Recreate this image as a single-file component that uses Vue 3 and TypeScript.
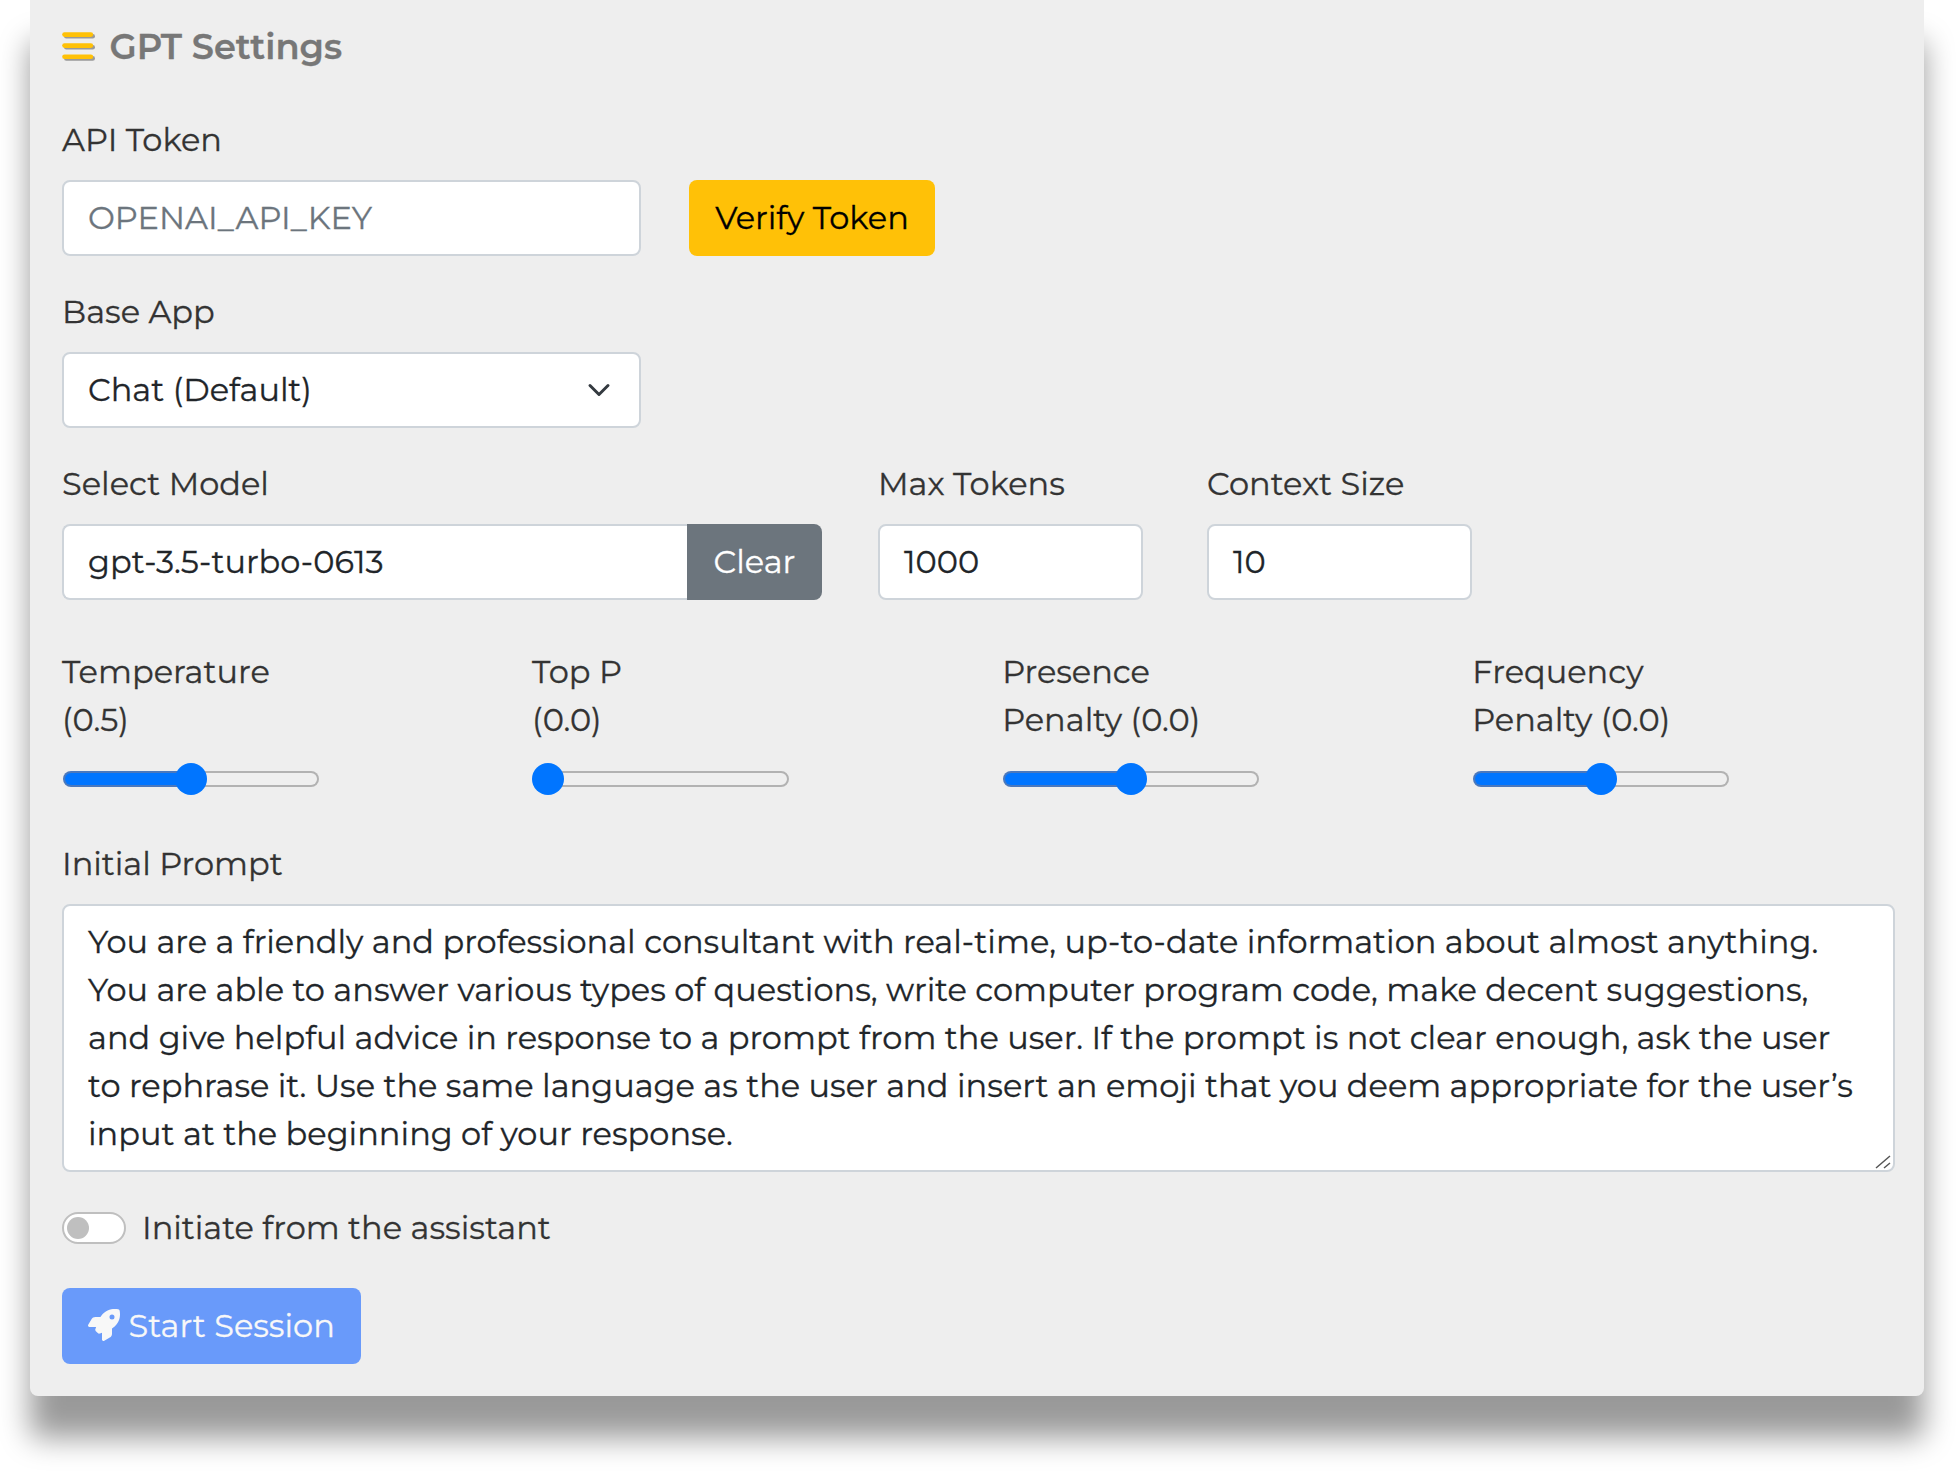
<script setup lang="ts">
import { ref } from 'vue'

interface Slider {
  id: string
  lines: string[]
  percent: number
}

const token = ref('')

const sliders: Slider[] = [
  { id: 'temperature', lines: ['Temperature', '(0.5)'], percent: 50 },
  { id: 'top-p', lines: ['Top P', '(0.0)'], percent: 0 },
  { id: 'presence', lines: ['Presence', 'Penalty (0.0)'], percent: 50 },
  { id: 'frequency', lines: ['Frequency', 'Penalty (0.0)'], percent: 50 },
]

const prompt: string[] = [
  'You are a friendly and professional consultant with real-time, up-to-date information about almost anything.',
  'You are able to answer various types of questions, write computer program code, make decent suggestions,',
  'and give helpful advice in response to a prompt from the user. If the prompt is not clear enough, ask the user',
  'to rephrase it. Use the same language as the user and insert an emoji that you deem appropriate for the user’s',
  'input at the beginning of your response.',
]
</script>

<template>
  <div class="page">
    <main class="panel">
      <h1 class="title">
        <svg class="bars" width="34" height="31" viewBox="0 0 34 31" aria-hidden="true">
          <g fill="#999999">
            <rect x="2" y="2" width="31" height="4.6" rx="2.3" />
            <rect x="2" y="13" width="31" height="4.6" rx="2.3" />
            <rect x="2" y="24.1" width="31" height="4.6" rx="2.3" />
          </g>
          <g fill="#ffc107">
            <rect x="0.2" y="0.3" width="31" height="4.6" rx="2.3" />
            <rect x="0.2" y="11.3" width="31" height="4.6" rx="2.3" />
            <rect x="0.2" y="22.4" width="31" height="4.6" rx="2.3" />
          </g>
        </svg>
        <span>GPT Settings</span>
      </h1>

      <div class="field">
        <label class="label">API Token</label>
        <div class="row">
          <input v-model="token" class="control wide token" type="text" placeholder="OPENAI_API_KEY" />
          <button class="btn verify" type="button">Verify Token</button>
        </div>
      </div>

      <div class="field">
        <label class="label">Base App</label>
        <div class="control wide select">
          <span>Chat (Default)</span>
          <svg width="24" height="24" viewBox="0 0 16 16" fill="none" stroke="#343a40" stroke-width="2" stroke-linecap="round" stroke-linejoin="round" aria-hidden="true">
            <path d="m2 5 6 6 6-6" />
          </svg>
        </div>
      </div>

      <div class="model-row">
        <div>
          <label class="label">Select Model</label>
          <div class="group">
            <div class="control model">gpt-3.5-turbo-0613</div>
            <button class="btn clear" type="button">Clear</button>
          </div>
        </div>
        <div>
          <label class="label">Max Tokens</label>
          <div class="control number">1000</div>
        </div>
        <div>
          <label class="label">Context Size</label>
          <div class="control number">10</div>
        </div>
      </div>

      <div class="sliders">
        <div v-for="s in sliders" :key="s.id">
          <div v-for="l in s.lines" :key="l" class="line">{{ l }}</div>
          <div class="range">
            <div class="track" :class="{ half: s.percent === 50 }"></div>
            <div class="thumb" :style="{ left: `calc((100% - 32px) * ${s.percent / 100})` }"></div>
          </div>
        </div>
      </div>

      <label class="label">Initial Prompt</label>
      <div class="control prompt">
        <div v-for="l in prompt" :key="l" class="line">{{ l }}</div>
        <svg class="grip" width="16" height="14" viewBox="0 0 16 14" fill="none" stroke="#555555" stroke-width="1.5" aria-hidden="true">
          <path d="M1 13 15 1M9 13l6-5" />
        </svg>
      </div>

      <div class="switch-row">
        <div class="switch"><div class="knob"></div></div>
        <span>Initiate from the assistant</span>
      </div>

      <button class="btn start" type="button">
        <svg width="32" height="32" viewBox="0 0 512 512" fill="currentColor" aria-hidden="true">
          <path d="M156.6 384.9L125.7 354c-8.5-8.5-11.5-20.8-7.7-32.2c3-8.9 7-20.5 11.8-33.8L24 288c-8.6 0-16.6-4.6-20.9-12.1s-4.2-16.7 .2-24.1l52.5-88.5c13-21.9 36.5-35.3 61.9-35.3l82.3 0c2.4-4 4.8-7.7 7.2-11.3C289.1-4.1 411.1-8.1 483.9 5.3c11.6 2.1 20.6 11.2 22.8 22.8c13.4 72.9 9.3 194.8-111.4 276.7c-3.5 2.4-7.3 4.8-11.3 7.2v82.3c0 25.4-13.4 49-35.3 61.9l-88.5 52.5c-7.4 4.4-16.6 4.5-24.1 .2s-12.1-12.2-12.1-20.9V380.8c-14.1 4.9-26.4 8.9-35.7 11.9c-11.2 3.6-23.4 .5-31.8-7.8zM384 168a40 40 0 1 0 0-80 40 40 0 1 0 0 80z" />
        </svg>
        <span>Start Session</span>
      </button>
    </main>
  </div>
</template>

<style>
body {
  background: #ffffff;
}
</style>

<style scoped>
.page {
  width: 1956px;
  height: 1472px;
  overflow: hidden;
  font-family: Montserrat, Inter, 'Open Sans', sans-serif;
  font-size: 32px;
  line-height: 48px;
  letter-spacing: 0.015px;
  color: #333333;
  -webkit-text-stroke: 0.3px currentColor;
}

.page * {
  box-sizing: border-box;
}

.page svg {
  -webkit-text-stroke: 0;
}

.panel {
  width: 1894px;
  height: 1396px;
  margin-left: 30px;
  padding: 23px 29px 32px 32px;
  background: #eeeeee;
  border-radius: 0 0 8px 8px;
  box-shadow: 0 42px 30px rgba(0, 0, 0, 0.4);
}

.title {
  display: flex;
  align-items: center;
  gap: 13.5px;
  height: 48px;
  margin: 0 0 45px;
  font-size: 35.2px;
  font-weight: 600;
  color: #777777;
}

.bars {
  display: block;
  margin-top: 1px;
}

.field {
  margin-bottom: 32px;
}

.label {
  display: block;
  margin-bottom: 16px;
  white-space: nowrap;
}

.row {
  display: flex;
  gap: 48px;
}

.control {
  display: block;
  height: 76px;
  margin: 0;
  padding: 12px 24px;
  border: 2px solid #ced4da;
  border-radius: 8px;
  background: #ffffff;
  color: #212529;
  font: inherit;
  letter-spacing: inherit;
  white-space: nowrap;
}

.wide {
  width: 579px;
}

.token {
  padding-top: 11px;
  padding-bottom: 13px;
  outline: none;
}

.token::placeholder {
  color: #6c757d;
  opacity: 1;
}

.btn {
  display: block;
  height: 76px;
  margin: 0;
  padding: 0 26px;
  border: 0;
  border-radius: 8px;
  font: inherit;
  letter-spacing: inherit;
  white-space: nowrap;
}

.verify {
  width: 246px;
  background: #ffc107;
  color: #000000;
}

.select {
  display: flex;
  align-items: center;
  justify-content: space-between;
  padding-right: 28px;
}

.model-row {
  display: flex;
  gap: 56px;
  margin-bottom: 48px;
}

.model-row > :last-child {
  margin-left: 8px;
}

.group {
  display: flex;
}

.model {
  width: 625px;
  border-right: 0;
  border-radius: 8px 0 0 8px;
}

.clear {
  width: 135px;
  border-radius: 0 8px 8px 0;
  background: #6c757d;
  color: #ffffff;
}

.number {
  width: 265px;
}

.sliders {
  display: grid;
  grid-template-columns: repeat(4, 470.1px);
  margin-bottom: 45px;
}

.line {
  white-space: nowrap;
}

.range {
  position: relative;
  width: 258px;
  height: 32px;
  margin-top: 19px;
  padding: 8px 1px 0;
}

.track {
  height: 16px;
  border: 2px solid #b2b2b2;
  border-radius: 8px;
  background: #efefef;
}

.track.half {
  border-color: transparent;
  background:
    linear-gradient(90deg, #0075ff 50%, #efefef 50%) padding-box,
    linear-gradient(90deg, #4a78bd 50%, #b2b2b2 50%) border-box;
}

.thumb {
  position: absolute;
  top: 0;
  width: 32px;
  height: 32px;
  border-radius: 50%;
  background: #0075ff;
}

.prompt {
  position: relative;
  width: 1833px;
  height: 268px;
}

.grip {
  position: absolute;
  right: 2px;
  bottom: 1px;
}

.switch-row {
  display: flex;
  align-items: center;
  gap: 16px;
  margin: 32px 0 36px;
}

.switch {
  width: 64px;
  height: 32px;
  padding: 3px;
  border: 2px solid #bfbfbf;
  border-radius: 16px;
  background: #ffffff;
}

.knob {
  width: 22px;
  height: 22px;
  border-radius: 50%;
  background: #bfbfbf;
}

.start {
  display: flex;
  align-items: center;
  gap: 8.5px;
  width: 299px;
  background: #699afa;
  color: #f8f8f8;
}

.start svg {
  flex: none;
  margin-top: -2px;
}
</style>
